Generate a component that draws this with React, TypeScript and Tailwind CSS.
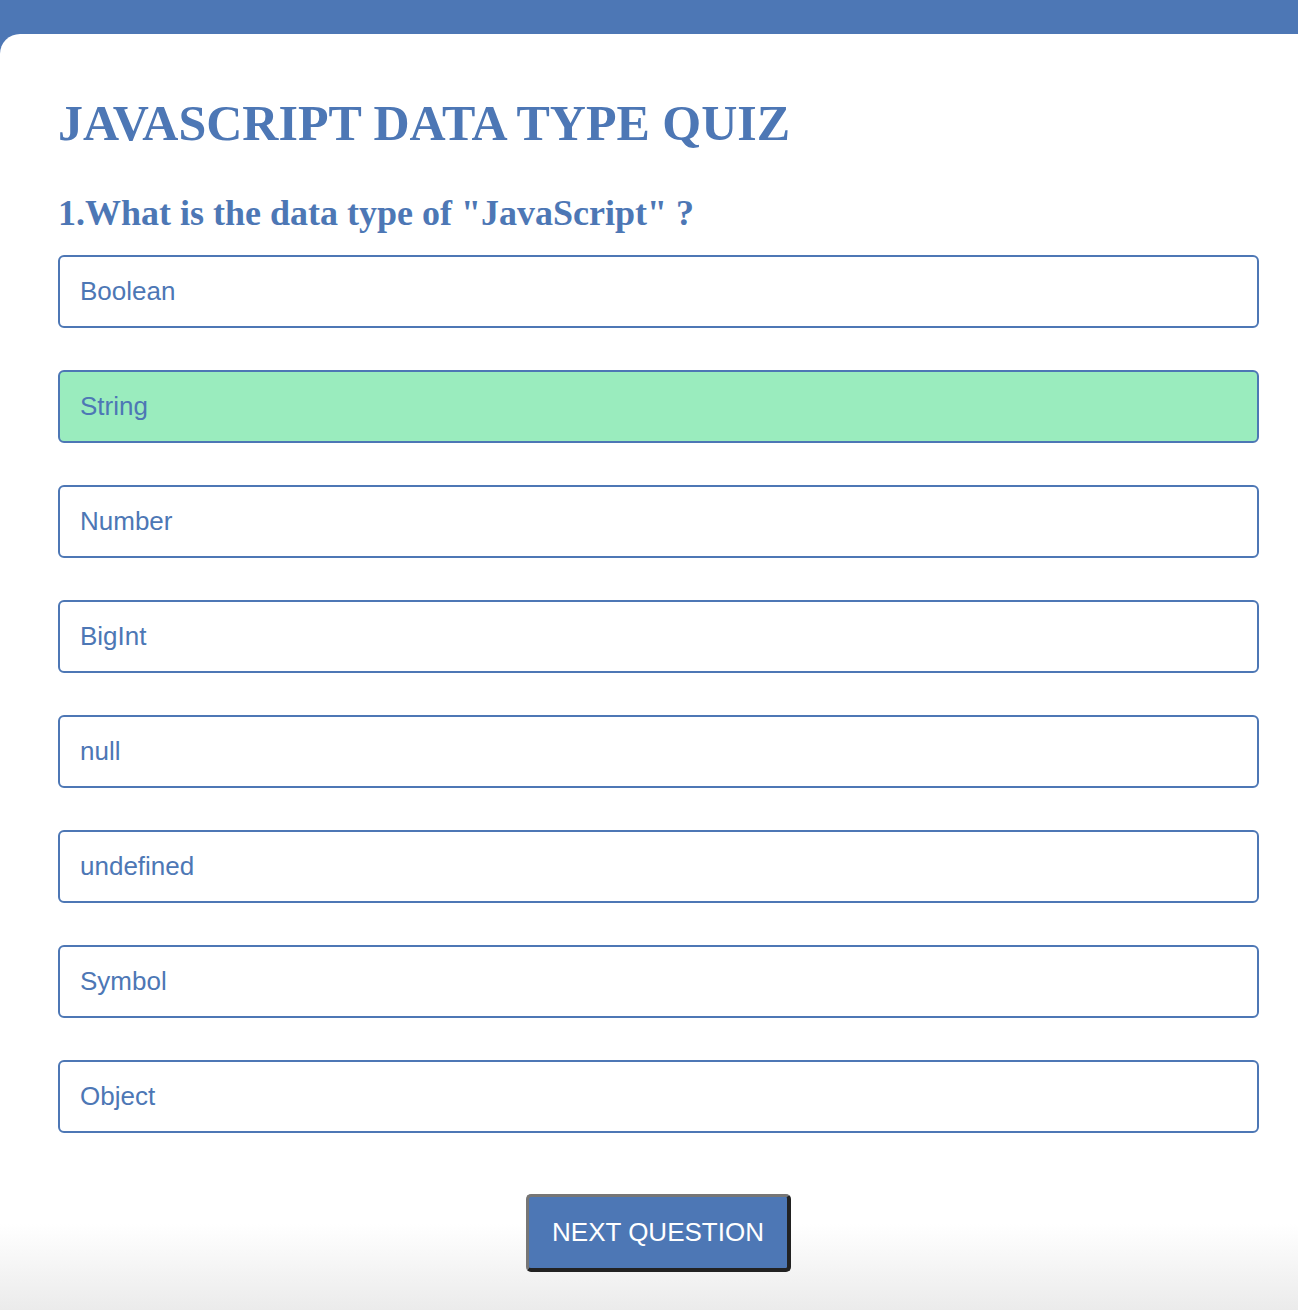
import React from "react";

const options = ["Boolean", "String", "Number", "BigInt", "null", "undefined", "Symbol", "Object"];

export default function App() {
  return (
    <div className="h-[1310px] w-full overflow-hidden bg-[#4d77b5] pt-[34px]">
      <div className="h-[1276px] rounded-tl-[20px] bg-[linear-gradient(to_bottom,#ffffff_1190px,#ebebeb_1276px)] pl-[58px] pr-[39px] pt-[64px]">
        <h1 className="font-['Liberation_Serif',serif] text-[50px] font-bold leading-none text-[#4d77b5]">
          JAVASCRIPT DATA TYPE QUIZ
        </h1>
        <h2 className="mt-[47px] font-['Liberation_Serif',serif] text-[36px] font-bold leading-none text-[#4d77b5]">
          1.What is the data type of "JavaScript" ?
        </h2>
        <div className="mt-[24px] flex flex-col gap-[42px]">
          {options.map((o) => (
            <div
              key={o}
              className={`flex h-[73px] items-center rounded-[6px] border-2 border-[#4d77b5] pl-[20px] font-['Liberation_Sans',sans-serif] text-[26px] text-[#4d77b5] ${
                o === "String" ? "bg-[#9aecbe]" : "bg-white"
              }`}
            >
              {o}
            </div>
          ))}
        </div>
        <div className="mt-[61px] flex justify-center">
          <button className="h-[78px] w-[265px] rounded-[5px] border-t-[3px] border-l-[3px] border-r-[4px] border-b-[4px] border-t-[#767676] border-l-[#767676] border-r-[#222222] border-b-[#222222] bg-[#4d77b5] font-['Liberation_Sans',sans-serif] text-[26px] text-white">
            NEXT QUESTION
          </button>
        </div>
      </div>
    </div>
  );
}
